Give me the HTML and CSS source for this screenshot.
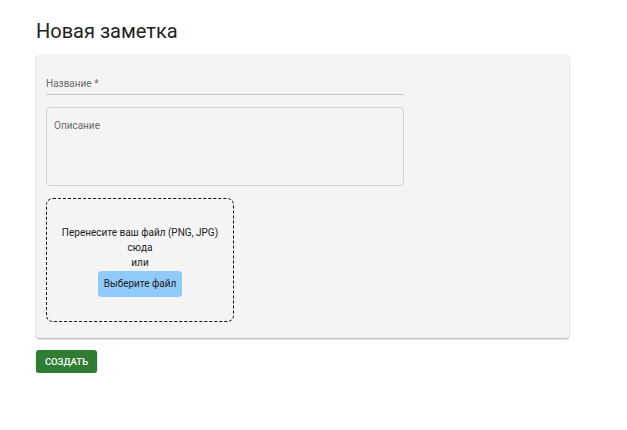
FILE: index.html
```html
<!DOCTYPE html>
<html lang="ru">
<head>
<meta charset="utf-8">
<link rel="stylesheet" href="styles.css">
</head>
<body>
<div class="page">
  <h1 class="title">Новая заметка</h1>
  <form class="card">
    <label class="field">
      <span class="field-label">Название *</span>
      <span class="field-line"></span>
    </label>
    <div class="textarea">
      <span class="placeholder">Описание</span>
    </div>
    <div class="dropzone">
      <div class="drop-text">Перенесите ваш файл (PNG, JPG)<br>сюда<br>или</div>
      <span class="pick-btn">Выберите файл</span>
    </div>
  </form>
  <button class="create-btn" type="button">Создать</button>
</div>
</body>
</html>
```
FILE: styles.css
```css
* { box-sizing: border-box; }
html, body { margin: 0; padding: 0; background: #fff; }
body { font-family: Roboto, "Noto Sans", sans-serif; color: #222; }
.page { padding: 19px 58px 0 36px; }
.title {
  margin: 0;
  font-size: 20px;
  font-weight: 400;
  line-height: 24px;
  color: #222;
}
.card {
  margin-top: 12px;
  width: 533px;
  height: 283px;
  background: #f4f4f4;
  border-radius: 3px;
  box-shadow: 0 1px 2px rgba(0,0,0,0.35);
  padding: 22px 10px 16px 10px;
  display: flex;
  flex-direction: column;
}
.field {
  width: 358px;
  display: flex;
  flex-direction: column;
}
.field-label {
  font-size: 10px;
  color: #6b6b6b;
  line-height: 13px;
  padding-bottom: 4px;
}
.field-line {
  height: 1px;
  border-bottom: 1px solid #c8c8c8;
}
.textarea {
  margin-top: 12px;
  width: 358px;
  height: 79px;
  border: 1px solid #d2d2d2;
  border-radius: 4px;
  padding: 6px 7px;
}
.placeholder {
  font-size: 10px;
  color: #6b6b6b;
}
.dropzone {
  margin-top: 12px;
  width: 188px;
  height: 125px;
  border: 1px dashed #111;
  border-radius: 7px;
  display: flex;
  flex-direction: column;
  align-items: center;
  justify-content: center;
  padding-top: 2px;
}
.drop-text {
  font-size: 10px;
  line-height: 15px;
  text-align: center;
  color: #222;
}
.pick-btn {
  margin-top: 1px;
  background: #90caf9;
  border-radius: 4px;
  padding: 0 6px;
  height: 26px;
  line-height: 26px;
  font-size: 10px;
  color: #222;
}
.create-btn {
  margin-top: 12px;
  width: 61px;
  height: 23px;
  border: 0;
  border-radius: 3px;
  background: #2e7d32;
  color: #fff;
  font-family: Roboto, sans-serif;
  font-size: 9.5px;
  font-weight: 500;
  text-transform: uppercase;
  box-shadow: 0 1px 2px rgba(0,0,0,0.3);
  padding: 0;
}
```
